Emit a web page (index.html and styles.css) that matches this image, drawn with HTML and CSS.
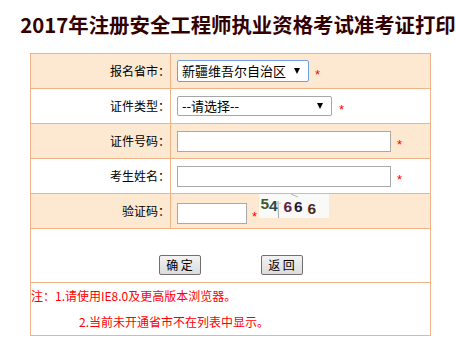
FILE: index.html
```html
<!DOCTYPE html>
<html lang="zh-CN">
<head>
<meta charset="utf-8">
<title>2017年注册安全工程师执业资格考试准考证打印</title>
<link rel="stylesheet" href="styles.css">
</head>
<body>
<div class="page">
  <h1 class="title">2017年注册安全工程师执业资格考试准考证打印</h1>
  <form class="form">
    <div class="row alt">
      <label class="label">报名省市：</label>
      <div class="field">
        <span class="select-wrap">
          <select class="select select-focus w-province"><option>新疆维吾尔自治区</option></select>
          <span class="arrow"></span>
        </span>
        <span class="req">*</span>
      </div>
    </div>
    <div class="row">
      <label class="label">证件类型：</label>
      <div class="field">
        <span class="select-wrap">
          <select class="select w-type"><option>--请选择--</option></select>
          <span class="arrow"></span>
        </span>
        <span class="req req-type">*</span>
      </div>
    </div>
    <div class="row alt">
      <label class="label">证件号码：</label>
      <div class="field">
        <input class="input w-long" type="text">
        <span class="req">*</span>
      </div>
    </div>
    <div class="row">
      <label class="label">考生姓名：</label>
      <div class="field">
        <input class="input w-long" type="text">
        <span class="req">*</span>
      </div>
    </div>
    <div class="row alt">
      <label class="label">验证码：</label>
      <div class="field field-code">
        <input class="input w-code" type="text">
        <span class="req req-code">*</span>
        <svg class="captcha" width="70" height="24" viewBox="0 0 70 24">
          <rect width="70" height="24" fill="#f9f9f8"/>
          <line x1="19" y1="7" x2="19.5" y2="24" stroke="#a8a8a8" stroke-width="1"/>
          <line x1="32" y1="0" x2="39" y2="3" stroke="#b5b5b5" stroke-width="1"/>
          <line x1="14" y1="10" x2="22" y2="9" stroke="#c8c8c8" stroke-width="1"/>
          <text x="1.5" y="15" class="cd d1">5</text>
          <text x="10" y="16.5" class="cd d2">4</text>
          <text x="24.5" y="18" class="cd d3">6</text>
          <text x="35" y="17.5" class="cd d4">6</text>
          <text x="48.5" y="19.5" class="cd d5">6</text>
        </svg>
      </div>
    </div>
    <div class="actions">
      <button class="btn" type="button">确 定</button>
      <button class="btn" type="button">返 回</button>
    </div>
    <div class="notes">
      <p>注：1.请使用IE8.0及更高版本浏览器。</p>
      <p class="indent">2.当前未开通省市不在列表中显示。</p>
    </div>
  </form>
</div>
</body>
</html>
```

FILE: styles.css
```css
* {
  box-sizing: border-box;
}

body {
  margin: 0;
  background: #ffffff;
  font-family: "Noto Sans CJK SC", "Noto Sans", sans-serif;
  color: #000000;
}

.page {
  width: 456px;
}

.title {
  margin: 0;
  height: 53px;
  padding-left: 20px;
  font-size: 20.4px;
  font-weight: bold;
  line-height: 48px;
  text-align: center;
  color: #330000;
  white-space: nowrap;
}

.form {
  margin: 0 0 0 30px;
  width: 401px;
  border: 1px solid #f0b388;
}

.row {
  display: grid;
  grid-template-columns: 140px 1fr;
  height: 35px;
  border-top: 1px solid #f0b388;
}

.row:first-child {
  height: 34px;
  border-top: 0;
}

.row.alt {
  background: #fde9d1;
}

.label {
  display: flex;
  align-items: center;
  justify-content: flex-end;
  padding-right: 0;
  border-right: 1px solid #f0b388;
  font-size: 12px;
  line-height: 14px;
  white-space: nowrap;
}

.field {
  display: flex;
  align-items: center;
  padding-left: 6px;
}

.select-wrap {
  position: relative;
  display: inline-block;
}

.select {
  appearance: none;
  -webkit-appearance: none;
  display: block;
  height: 20px;
  margin: 0;
  padding: 0 0 0 4px;
  border: 1px solid #a6a6a6;
  border-radius: 2px;
  background: #ffffff;
  font-family: "Noto Sans CJK SC", "Noto Sans", sans-serif;
  font-size: 13px;
  line-height: 18px;
  color: #000000;
}

.select-focus {
  height: 22px;
  border-color: #6f9fdc;
}

.w-province {
  width: 132px;
}

.w-type {
  width: 155px;
}

.arrow {
  position: absolute;
  right: 9px;
  top: 50%;
  margin-top: -3px;
  width: 0;
  height: 0;
  border-left: 3.5px solid transparent;
  border-right: 3.5px solid transparent;
  border-top: 6px solid #000000;
}

.input {
  display: block;
  height: 21px;
  margin: 0;
  padding: 0 3px;
  border: 1px solid #a9a9a9;
  background: #ffffff;
  font-size: 13px;
}

.w-long {
  width: 214px;
}

.w-code {
  width: 70px;
}

.req {
  margin-left: 6px;
  margin-top: 6px;
  font-family: "Liberation Sans", sans-serif;
  font-size: 13px;
  line-height: 13px;
  color: #ff0000;
}

.req-type {
  margin-left: 7px;
}

.field-code {
  align-items: flex-start;
}

.field-code .input {
  margin-top: 9px;
}

.req-code {
  margin-left: 5px;
  margin-top: 16px;
  width: 6px;
}

.captcha {
  display: block;
  margin-left: 1px;
}

.cd {
  font-family: "Liberation Sans", sans-serif;
  font-size: 15.5px;
  font-weight: bold;
}

.d1 { fill: #3f5a2b; }
.d2 { fill: #2b4b4d; }
.d3 { fill: #5b2443; }
.d4 { fill: #1d1c36; }
.d5 { fill: #4d2b1b; }

.actions {
  display: flex;
  justify-content: center;
  align-items: flex-start;
  gap: 60px;
  height: 54px;
  padding-top: 26px;
  border-top: 1px solid #f0b388;
}

.btn {
  width: 42px;
  height: 20px;
  margin: 0;
  padding: 0;
  border: 1px solid #707070;
  border-radius: 2px;
  background: linear-gradient(#f3f3f3, #dcdcdc);
  font-family: "Noto Sans CJK SC", sans-serif;
  font-size: 12px;
  line-height: 18px;
  color: #000000;
}

.notes {
  border-top: 1px solid #f0b388;
  color: #ff0000;
  font-size: 12px;
  line-height: 26px;
}

.notes p {
  margin: 0;
  white-space: nowrap;
}

.notes .indent {
  padding-left: 48px;
}
```
